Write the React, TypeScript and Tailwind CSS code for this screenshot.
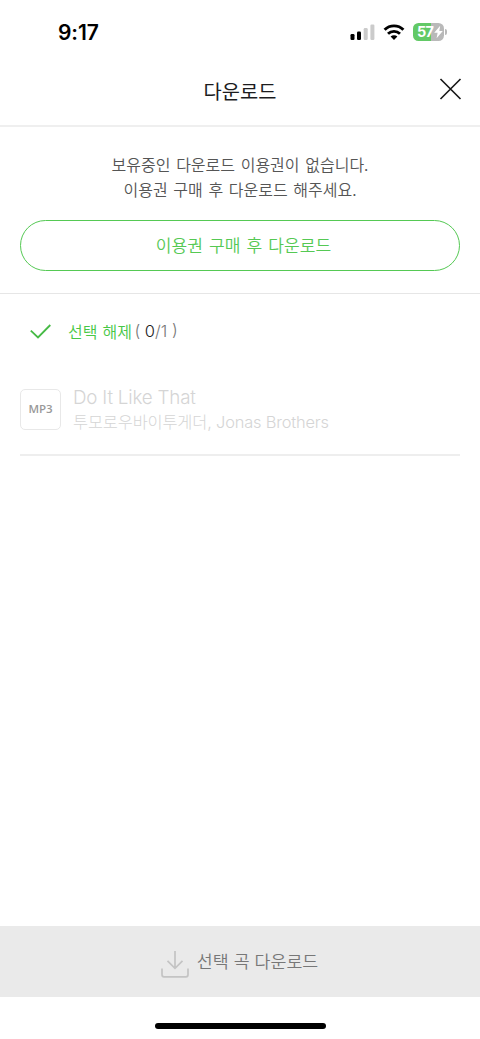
const StatusBar = () => {
  return (
    <div className="flex h-[54px] items-start justify-between pr-[33px] pl-[58px] text-black">
      <div className="mt-[19px] font-['Inter',sans-serif] text-[21px] leading-7 font-semibold tracking-[-0.1px]">
        9:17
      </div>
      <div className="mt-[22px] flex h-5 items-center">
        <svg width="25" height="16" viewBox="0 0 25 16">
          <rect x="0.5" y="10" width="4" height="6" rx="1.2" fill="#000" />
          <rect x="7" y="7.5" width="4" height="8.5" rx="1.2" fill="#000" />
          <rect x="13.7" y="4" width="4" height="12" rx="1.2" fill="#cbcbcb" />
          <rect x="20.4" y="0.5" width="4" height="15.5" rx="1.2" fill="#cbcbcb" />
        </svg>
        <svg className="ml-2" width="22" height="16" viewBox="0 0 22 16" fill="none" stroke="#000" strokeWidth="2.9">
          <path d="M1.6 5.8C6.8 .6 15.2 .6 20.4 5.8" />
          <path d="M5 9.8c3.4-3.2 8.6-3.2 12 0" />
          <path d="M7.6 12.6c1.9-1.7 4.9-1.7 6.8 0L11 16z" fill="#000" stroke="none" />
        </svg>
        <div className="ml-2 flex h-[18px] w-[31px] items-center overflow-hidden rounded-[5.5px] bg-linear-to-r from-[#62c966] from-57% to-[#b9b9b9] to-57% pl-[4px] font-['Inter',sans-serif] text-[14.5px] font-bold tracking-[-0.8px] text-white">
          57
          <svg className="ml-px shrink-0" width="9" height="14" viewBox="0 0 9 14" fill="#fff">
            <path d="M6.2 .8L.2 7.8h3.4L2.6 13.2 8.8 5.9H5.3z" />
          </svg>
        </div>
        <div className="ml-px h-[6px] w-[2px] rounded-r-full bg-[#b9b9b9]" />
      </div>
    </div>
  );
};

const Header = () => {
  return (
    <div className="grid h-[73px] grid-cols-[1fr_auto_1fr] items-center border-b-2 border-[#efefef] px-[18px]">
      <h1 className="col-start-2 pt-0.5 text-[19.8px] leading-7 font-normal text-[#1c1c1e]">다운로드</h1>
      <button className="mb-px justify-self-end">
        <svg width="23" height="22" viewBox="0 0 23 22" fill="none" stroke="#151515" strokeWidth="1.6">
          <path d="M1.5 1l20 20M21.5 1l-20 20" />
        </svg>
      </button>
    </div>
  );
};

const Notice = () => {
  return (
    <div className="h-[167px] border-b border-[#e6e6e6] px-5 pt-[25px] text-center">
      <p className="text-[16px] leading-[25px] font-[350] text-[#555] [word-spacing:2.1px]">
        보유중인 다운로드 이용권이 없습니다.
        <br />
        이용권 구매 후 다운로드 해주세요.
      </p>
      <button className="mt-[18px] h-[51px] w-full rounded-full border-[1.5px] border-[#55c954] pb-0.5 pl-[7px] text-[17.1px] font-[350] text-[#55c954] [word-spacing:2.2px]">
        이용권 구매 후 다운로드
      </button>
    </div>
  );
};

const SelectRow = () => {
  return (
    <div className="flex h-[74px] items-center pl-[30px]">
      <svg width="21" height="15" viewBox="0 0 21 15" fill="none" stroke="#46ba45" strokeWidth="1.8">
        <path d="M.8 6.6l7.2 6.8L20.3 1" />
      </svg>
      <div className="ml-[17px] text-[16px] font-[350] text-[#47c746] [word-spacing:1.5px]">선택 해제</div>
      <div className="ml-[2.5px] font-['Inter',sans-serif] text-[16.5px] font-light whitespace-pre text-[#777]">
        ( <span className="font-[350] text-[#222]">0</span>/1 )
      </div>
    </div>
  );
};

const SongItem = () => {
  return (
    <div className="mx-5 flex h-[88px] border-b-2 border-[#eee] pt-[21px]">
      <div className="flex size-[41px] items-center justify-center rounded-[5px] border border-[#e8e8e8] pb-px font-['Open_Sans',sans-serif] text-[11.5px] font-semibold text-[#999]">
        MP3
      </div>
      <div className="-mt-[3px] ml-3 font-['Inter','Noto_Sans_CJK_KR',sans-serif] font-light text-[#d5d5d5]">
        <div className="text-[18.8px] leading-6 tracking-[-0.2px]">Do It Like That</div>
        <div className="text-[16.4px] leading-6 tracking-[-0.17px]">투모로우바이투게더, Jonas Brothers</div>
      </div>
    </div>
  );
};

const DownloadBar = () => {
  return (
    <div>
      <button className="flex h-[71px] w-full items-center justify-center bg-[#eaeaea] pr-px text-[17.3px] font-[350] text-[#777] [word-spacing:1.2px]">
        <svg className="mt-[5px]" width="28" height="27" viewBox="0 0 28 27" fill="none" stroke="#c4c4c4" strokeWidth="1.7">
          <path d="M14 0v17M6.5 9.8L14 17.3l7.5-7.5M1 17.5v6.3q0 2 2 2h22q2 0 2-2v-6.3" />
        </svg>
        <span className="ml-2 pb-0.5">선택 곡 다운로드</span>
      </button>
      <div className="flex h-[42px] justify-center pt-[26px]">
        <div className="h-[6px] w-[171px] rounded-full bg-black" />
      </div>
    </div>
  );
};

export default function App() {
  return (
    <div className="flex h-[1039px] w-[480px] flex-col bg-white font-['Noto_Sans_CJK_KR',sans-serif]">
      <StatusBar />
      <Header />
      <Notice />
      <SelectRow />
      <SongItem />
      <div className="flex-1" />
      <DownloadBar />
    </div>
  );
}
